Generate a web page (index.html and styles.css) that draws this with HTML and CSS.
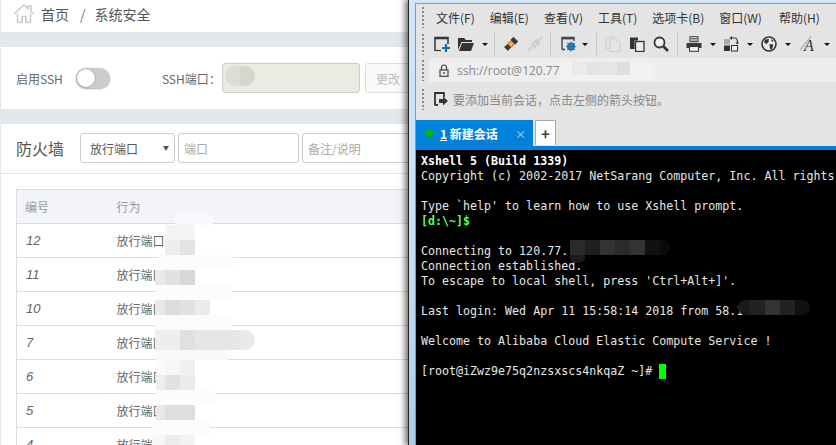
FILE: index.html
```html
<!DOCTYPE html>
<html lang="zh-CN">
<head>
<meta charset="utf-8">
<title>系统安全</title>
<link rel="stylesheet" href="styles.css">
</head>
<body>
<div class="desk">
  <div class="web">
    <div class="crumb">
      <svg class="home" viewBox="0 0 22 20" width="22" height="20"><path d="M1 10 L11 1 L15 4.6 V2 H18 V7.5 L21 10" fill="none" stroke="#ccc" stroke-width="1.6"/><path d="M4.5 9.5 V18.5 H9 V12.5 H13 V18.5 H17.5 V9.5" fill="none" stroke="#ccc" stroke-width="1.6"/></svg>
      <span>首页</span><span class="slash">/</span><span>系统安全</span>
    </div>
    <div class="card ssh">
      <span class="lbl">启用SSH</span>
      <span class="toggle"><span class="knob"></span></span>
      <span class="lbl portlbl">SSH端口：</span>
      <span class="field disabled"></span>
      <span class="btn">更改</span>
    </div>
    <div class="card fw">
      <div class="fwhead">
        <h2>防火墙</h2>
        <span class="field sel">放行端口<i class="car"></i></span>
        <span class="field port">端口</span>
        <span class="field note">备注/说明</span>
      </div>
      <div class="fwbody">
        <table>
          <thead><tr><th class="c1">编号</th><th>行为</th></tr></thead>
          <tbody>
            <tr><td class="c1">12</td><td>放行端口</td></tr>
            <tr><td class="c1">11</td><td>放行端口</td></tr>
            <tr><td class="c1">10</td><td>放行端口</td></tr>
            <tr><td class="c1">7</td><td>放行端口</td></tr>
            <tr><td class="c1">6</td><td>放行端口</td></tr>
            <tr><td class="c1">5</td><td>放行端口</td></tr>
            <tr><td class="c1">4</td><td>放行端口</td></tr>
          </tbody>
        </table>
      </div>
    </div>
  </div>

  <div class="smear s0"></div>
  <div class="smear sa"></div><div class="smear sa2"></div>
  <div class="smear sb"></div><div class="smear sc"></div>
  <div class="smear sd"></div><div class="smear se"></div><div class="smear sf"></div>
  <div class="smear sg"></div><div class="smear sh"></div><div class="smear si"></div>
  <div class="smear sj"></div><div class="smear sk"></div><div class="smear sl"></div>
  <div class="smear sm"></div><div class="smear sn"></div>
  <div class="smear sport"></div>

  <div class="xshell">
    <div class="xin">
      <div class="row menu">
        <i class="grip"></i>
        <span>文件(F)</span><span>编辑(E)</span><span>查看(V)</span><span>工具(T)</span><span>选项卡(B)</span><span>窗口(W)</span><span>帮助(H)</span>
      </div>
      <div class="row tools">
        <i class="grip"></i>
        <svg viewBox="0 0 16 16" width="16" height="16"><path d="M1 15 V1.500 H14 V8 M1 2.500 H14" fill="none" stroke="#333" stroke-width="1.500"/><path d="M1 14.500 H7" stroke="#333" stroke-width="1.200"/><path d="M8 12 H16 M12 8 V16" stroke="#0d6fa8" stroke-width="2.200"/></svg>
        <svg viewBox="0 0 16 16" width="16" height="16"><path d="M0 14 V2 H6 L8 4 H14 V6 H3.500 L0 14 Z M1 15 L4 7 H16 L13 15 Z" fill="#333"/></svg>
        <i class="caret"></i>
        <i class="sep s2"></i>
        <svg viewBox="0 0 16 16" width="16" height="16"><path d="M10.500 0.800 L15.200 5.500 L12 8.700 L7.300 4 Z M5.500 7.300 L8.700 10.500 L5 15 L1 11 Z" fill="#3a3a3a"/><path d="M7 4.500 L11.500 9 L8.500 12 L4 7.500 Z" fill="#e98a2b"/><path d="M6.800 7 L9 9.200" stroke="#fff" stroke-width="1"/></svg>
        <svg viewBox="0 0 16 16" width="16" height="16"><path d="M15.500 0.500 L11 5 M1 15 L5 11" stroke="#c9c9c9" stroke-width="1.500"/><path d="M9 2.500 L13.500 7 L8 12.500 L3.500 8 Z" fill="#cdcdcd"/><path d="M6 6 L10 10" stroke="#eee"/></svg>
        <i class="sep s1"></i>
        <svg viewBox="0 0 16 16" width="16" height="16"><path d="M1 13.500 V1.500 H13 V5 M1 13.500 H4" fill="none" stroke="#444" stroke-width="1.400"/><path d="M1 2.700 H13" stroke="#444" stroke-width="1.400"/><circle cx="10" cy="10.500" r="3" fill="none" stroke="#1a76ad" stroke-width="2"/><path d="M10 5.500 V15.500 M5 10.500 H15 M6.500 7 L13.500 14 M13.500 7 L6.500 14" stroke="#1a76ad" stroke-width="1.100"/></svg>
        <i class="caret c5"></i>
        <i class="sep"></i>
        <svg viewBox="0 0 16 16" width="16" height="16"><path d="M1 3.500 V12.500 H4 M1 3.500 L4 1 H9 V3" fill="none" stroke="#cfcfcf"/><path d="M5 3 H11 L15 6.500 V15.500 H5 Z" fill="none" stroke="#cfcfcf" stroke-width="1.200"/></svg>
        <svg viewBox="0 0 16 16" width="16" height="16"><path d="M1 1.500 H9 V4.500 H5.500 V13 H1 Z" fill="#333"/><rect x="6.500" y="5.500" width="8.500" height="10" fill="#eee" stroke="#333" stroke-width="1.300"/></svg>
        <svg viewBox="0 0 16 16" width="16" height="16"><circle cx="6.500" cy="6.500" r="5" fill="#f2f2f2" stroke="#333" stroke-width="1.800"/><path d="M10.500 10.500 L15 15" stroke="#333" stroke-width="2.600"/></svg>
        <i class="sep"></i>
        <svg viewBox="0 0 16 16" width="16" height="16"><rect x="4" y="0.700" width="8" height="5" fill="#eee" stroke="#333"/><path d="M5 2.500 H11 M5 4 H11" stroke="#333" stroke-width=".7"/><path d="M0.500 7 H15.500 V12 H0.500 Z" fill="#3a3a3a"/><rect x="3.500" y="10.500" width="9" height="4.800" fill="#eee" stroke="#333"/></svg>
        <i class="caret"></i>
        <svg class="nudge" viewBox="0 0 16 16" width="16" height="16"><rect x="1" y="3" width="6" height="5.500" fill="#aaa"/><rect x="1" y="9.500" width="6" height="5.500" fill="#333"/><rect x="8.500" y="9.500" width="6" height="5.500" fill="#eee" stroke="#333"/><path d="M8 2 H12 Q14.500 2 14.500 7" fill="none" stroke="#333" stroke-width="1.200"/><path d="M12.500 6.500 H16 L14.300 8.500 Z M9 0 V4 L6.500 2 Z" fill="#333"/></svg>
        <i class="caret"></i>
        <svg viewBox="0 0 16 16" width="16" height="16"><circle cx="8" cy="8" r="7" fill="#eee" stroke="#333" stroke-width="1.600"/><path d="M4 3.500 L8 3 L7.500 6 L5.500 8 L3 6.500 Z M8.500 8 L12.500 8.500 L11 13 L9 13.500 Z M10 3 L13 5 L11 6 Z" fill="#333"/></svg>
        <i class="caret"></i>
        <svg viewBox="0 0 18 16" width="18" height="16"><path d="M1 14 L12 0.500" stroke="#b5b5b5" stroke-width="1.500"/><text class="fonticon" x="5" y="14.500">A</text></svg>
        <i class="caret c6"></i>
        <i class="sep"></i>
      </div>
      <div class="row addr">
        <i class="grip"></i>
        <div class="addrbox">
          <svg viewBox="0 0 10 13" width="10" height="13"><path d="M2.500 6 V3.500 A2.500 2.500 0 0 1 7.500 3.500 V6" fill="none" stroke="#444" stroke-width="1.200"/><rect x="1" y="6" width="8" height="6.300" fill="none" stroke="#444" stroke-width="1.200"/><rect x="4.300" y="8" width="1.400" height="2" fill="#444"/></svg>
          <span>ssh://root@120.77</span>
        </div>
      </div>
      <div class="row hint">
        <i class="grip"></i>
        <svg viewBox="0 0 14 14" width="14" height="14"><path d="M1 13.500 V1 H10 V5" fill="none" stroke="#333" stroke-width="1.800"/><path d="M1 13 H4" stroke="#333" stroke-width="1.800"/><path d="M5 7 H9 V4.500 L14 9 L9 13.500 V11 H5 Z" fill="#333"/></svg>
        <span>要添加当前会话，点击左侧的箭头按钮。</span>
      </div>
      <div class="tabs">
        <div class="tab"><i class="dot"></i><b><u>1</u> 新建会话</b><span class="close">×</span></div>
        <div class="add">+</div>
      </div>
      <pre class="term"><b>Xshell 5 (Build 1339)</b>
Copyright (c) 2002-2017 NetSarang Computer, Inc. All rights

Type `help' to learn how to use Xshell prompt.
<b class="green">[d:\~]$</b>

Connecting to 120.77.
Connection established.
To escape to local shell, press 'Ctrl+Alt+]'.

Last login: Wed Apr 11 15:58:14 2018 from 58.1

Welcome to Alibaba Cloud Elastic Compute Service !

[root@iZwz9e75q2nzsxscs4nkqaZ ~]# <i class="cursor"></i></pre>
    </div>
  </div>
  <div class="smear taddr"></div><div class="smear taddr2"></div>
  <div class="smear t1"></div><div class="smear t1b"></div><div class="smear t2"></div>
</div>
</body>
</html>
```
FILE: styles.css
```css
* { box-sizing: border-box; }
html, body { margin: 0; padding: 0; background: #e4e8ed; }
body { font-family: "Noto Sans CJK SC", "Liberation Sans", sans-serif; color: #666; }
.desk { position: relative; width: 836px; height: 445px; overflow: hidden; }

/* web page on the left */
.web { width: 836px; padding-left: 1px; }
.crumb { height: 32px; background: #fff; display: flex; align-items: center; padding: 0 0 5px 12px; font-size: 14px; color: #555; }
.home { margin-right: 6px; }
.slash { margin: 0 9px 0 11px; color: #777; }
.card { background: #fff; }
.ssh { margin-top: 15px; height: 62px; display: flex; align-items: center; padding-left: 15px; }
.lbl { font-size: 12px; color: #666; white-space: nowrap; }
.toggle { position: relative; width: 34px; height: 20px; margin-left: 13px; border-radius: 10px; background: #ccc; box-shadow: 0 1px 2px #aaa; }
.knob { position: absolute; left: 1px; top: 1px; width: 18px; height: 18px; border-radius: 50%; background: #fff; box-shadow: 0 0 2px #777; }
.portlbl { margin-left: 52px; width: 60px; }
.field { display: block; border: 1px solid #ccc; border-radius: 3px; font-size: 12px; background: #fff; }
.disabled { width: 138px; height: 30px; background: #ebebe4; }
.btn { width: 60px; height: 30px; margin-left: 5px; border: 1px solid #ddd; border-radius: 3px; background: #fafafa; color: #bbb; font-size: 12px; display: flex; align-items: center; padding-left: 10px; }
.fw { margin-top: 15px; height: 321px; }
.fwhead { height: 50px; display: flex; align-items: center; padding: 0 0 1px 15px; border-bottom: 1px solid #e4e4e4; }
.fwhead h2 { margin: 0 15px 0 0; width: 49px; font-size: 16px; font-weight: 400; color: #555; white-space: nowrap; }
.fwhead .field { height: 30px; display: flex; align-items: center; margin-right: 3px; }
.sel { position: relative; width: 95px; padding-left: 9px; color: #555; }
.car { position: absolute; left: 82px; top: 12px; border: 3px solid transparent; border-top: 5px solid #555; border-bottom: 0; }
.port { width: 121px; padding-left: 5px; color: #aaa; }
.note { width: 160px; padding-left: 5px; color: #aaa; }
.fwbody { padding: 15px 0 0 15px; }
table { width: 800px; border-collapse: collapse; font-size: 12px; color: #666; table-layout: fixed; }
th, td { height: 34px; border: 1px solid #ddd; border-width: 1px 0; text-align: left; padding: 0 0 0 8px; font-weight: 400; }
th { background: #f3f4f8; color: #999; }
th:first-child, td:first-child { border-left: 1px solid #ddd; }
.c1 { width: 91px; }
td:nth-child(2), th:nth-child(2) { padding-left: 9px; }
td.c1 { font-style: italic; font-size: 13px; font-family: "Liberation Sans", sans-serif; padding-left: 9px; }

/* mosaics over the private values */
.smear { position: absolute; }
.s0 { left: 175px; top: 213px; width: 38px; height: 12px; background: #f8f9fb; border-radius: 6px 6px 0 0; }
.sa { left: 165px; top: 225px; width: 30px; height: 30px; background: #f4f4f4; }
.sa2 { left: 165px; top: 240px; width: 30px; height: 15px; background: linear-gradient(90deg, #eeeeee 0 15px, #e4e4e4 15px); }
.sb { left: 158px; top: 255px; width: 75px; height: 15px; background: #fcfcfc; }
.sc { left: 155px; top: 270px; width: 40px; height: 15px; background: linear-gradient(90deg, #e9ebeb 0 10px, #e2e2e2 10px 25px, #d8d8d8 25px); }
.sd { left: 155px; top: 285px; width: 77px; height: 15px; background: #fcfcfc; }
.se { left: 155px; top: 300px; width: 55px; height: 15px; background: linear-gradient(90deg, #e8eaea 0 10px, #dcdcdc 10px 25px, #e0e2e2 25px 40px, #eaecec 40px); }
.sf { left: 155px; top: 315px; width: 76px; height: 15px; background: #fbfbfb; }
.sg { left: 155px; top: 330px; width: 100px; height: 20px; border-radius: 0 10px 10px 0; background: linear-gradient(90deg, #eeeeee 0 25px, #e0e0e0 25px 40px, #e6e6e6 40px 85px, #e9e9e9 85px); }
.sh { left: 156px; top: 350px; width: 72px; height: 10px; background: #f9f9f9; }
.si { left: 156px; top: 360px; width: 39px; height: 15px; background: linear-gradient(90deg, #fafafa 0 9px, #f6f6f6 9px 24px, #f0f0f0 24px); }
.sj { left: 156px; top: 375px; width: 39px; height: 15px; background: linear-gradient(90deg, #eeeeee 0 9px, #e2e2e2 9px 24px, #ebebeb 24px); }
.sk { left: 156px; top: 390px; width: 59px; height: 15px; background: #fcfcfc; }
.sl { left: 156px; top: 405px; width: 39px; height: 15px; background: linear-gradient(90deg, #e8e8e8 0 9px, #dedede 9px); }
.sm { left: 152px; top: 420px; width: 58px; height: 15px; background: #fcfcfc; }
.sn { left: 152px; top: 435px; width: 43px; height: 10px; background: linear-gradient(90deg, #f6f6f6 0 13px, #ececec 13px 28px, #f2f2f2 28px); }
.sport { left: 225px; top: 66px; width: 30px; height: 20px; border-radius: 10px; background: linear-gradient(90deg, #dddcd5 0 15px, #d6d6cf 15px); }
.taddr { left: 560px; top: 62px; width: 95px; height: 19px; background: #f2f2f2; border-radius: 0 8px 8px 0; }
.taddr2 { left: 572px; top: 62px; width: 58px; height: 13px; background: linear-gradient(90deg, #eaeaea 0 15px, #e4e4e4 15px 30px, #e6e6e6 30px 45px, #dedede 45px); }
.t1 { left: 570px; top: 240px; width: 100px; height: 15px; border-radius: 0 8px 8px 0; background: linear-gradient(90deg, #2a2a2a 0 15px, #1c2020 15px 30px, #333 30px 45px, #2a2a2a 45px 60px, #333 60px 75px, #111 75px 90px, #0a0a0a 90px); }
.t1b { left: 570px; top: 255px; width: 15px; height: 8px; background: #1b1b1b; border-radius: 0 0 6px 6px; }
.t2 { left: 738px; top: 300px; width: 72px; height: 15px; border-radius: 8px; background: linear-gradient(90deg, #1a1a1a 0 12px, #222 12px 27px, #333 27px 42px, #222 42px 57px, #111 57px); }

/* Xshell window */
.xshell { position: absolute; left: 408px; top: 0; width: 428px; height: 445px; padding: 3px 0 0 6px; border-left: 1px solid #222; background: linear-gradient(#d4e6f6, #c6def4 55%, #a9cdec); box-shadow: -2px 0 6px 1px rgba(0,0,0,.55); }
.xin { height: 100%; display: flex; flex-direction: column; border: 1px solid #8f99a3; border-width: 1px 0 0 1px; background: #e4e4e4; overflow: hidden; font-size: 12px; color: #333; }
.row { display: flex; align-items: center; flex: none; padding-left: 6px; white-space: nowrap; }
.grip { flex: none; width: 2px; height: 21px; background: repeating-linear-gradient(#888 0 2px, transparent 2px 4px); }
.menu { height: 26px; }
.menu .grip { margin-right: 12px; }
.menu span { margin-right: 15px; }
.menu span:nth-child(7) { margin-right: 17px; }
.tools { height: 28px; gap: 8px; }
.tools .grip { margin-right: 2px; }
.tools svg { flex: none; }
.caret { flex: none; width: 0; height: 0; border: 3px solid transparent; border-top: 3px solid #111; border-bottom: 0; }
.c5 { margin-left: -3px; }
.sep { flex: none; width: 1px; height: 22px; background: #c6c6c6; }
.s2 { margin-left: -2px; }
.s1 { margin: 0 2px 0 -1px; }
.nudge { margin-left: -1px; }
.c6 { margin-left: -1px; }
.fonticon { font: italic 16px "Liberation Serif", serif; fill: #333; }
.addr { height: 27px; padding-bottom: 3px; }
.addrbox { flex: 1; height: 24px; margin-left: 5px; background: #eee; display: flex; align-items: center; padding-left: 10px; gap: 8px; color: #888; font-family: "Open Sans", sans-serif; }
.hint { height: 31px; padding-bottom: 3px; color: #888; }
.hint svg { margin-left: 10px; margin-right: 5px; }
.tabs { flex: none; height: 30px; margin-top: 4px; display: flex; align-items: flex-start; background: #e4e4e4; border-bottom: 4px solid #0082dc; }
.tab { width: 117px; height: 26px; background: #0082dc; color: #fff; display: flex; align-items: center; padding-left: 9px; position: relative; }
.dot { width: 8px; height: 8px; border-radius: 50%; background: #00b800; margin-right: 7px; }
.tab b { font-size: 12px; }
.close { position: absolute; left: 99px; top: 6px; font-size: 11px; color: #b9dcf5; }
.add { width: 21px; height: 25px; margin: 0 0 0 2px; background: #fff; border: 1px solid #aaa; border-bottom: 0; display: flex; align-items: center; justify-content: center; font-weight: 700; font-size: 15px; color: #444; }
.term { flex: 1; margin: 0; padding: 4px 0 0 5px; background: #000; color: #e6e6e6; font: 11.65px/15px "DejaVu Sans Mono", monospace; overflow: hidden; }
.term b { color: #fff; }
.term .green { color: #55ff55; }
.cursor { display: inline-block; width: 7px; height: 15px; background: #00ff00; vertical-align: top; }
```
